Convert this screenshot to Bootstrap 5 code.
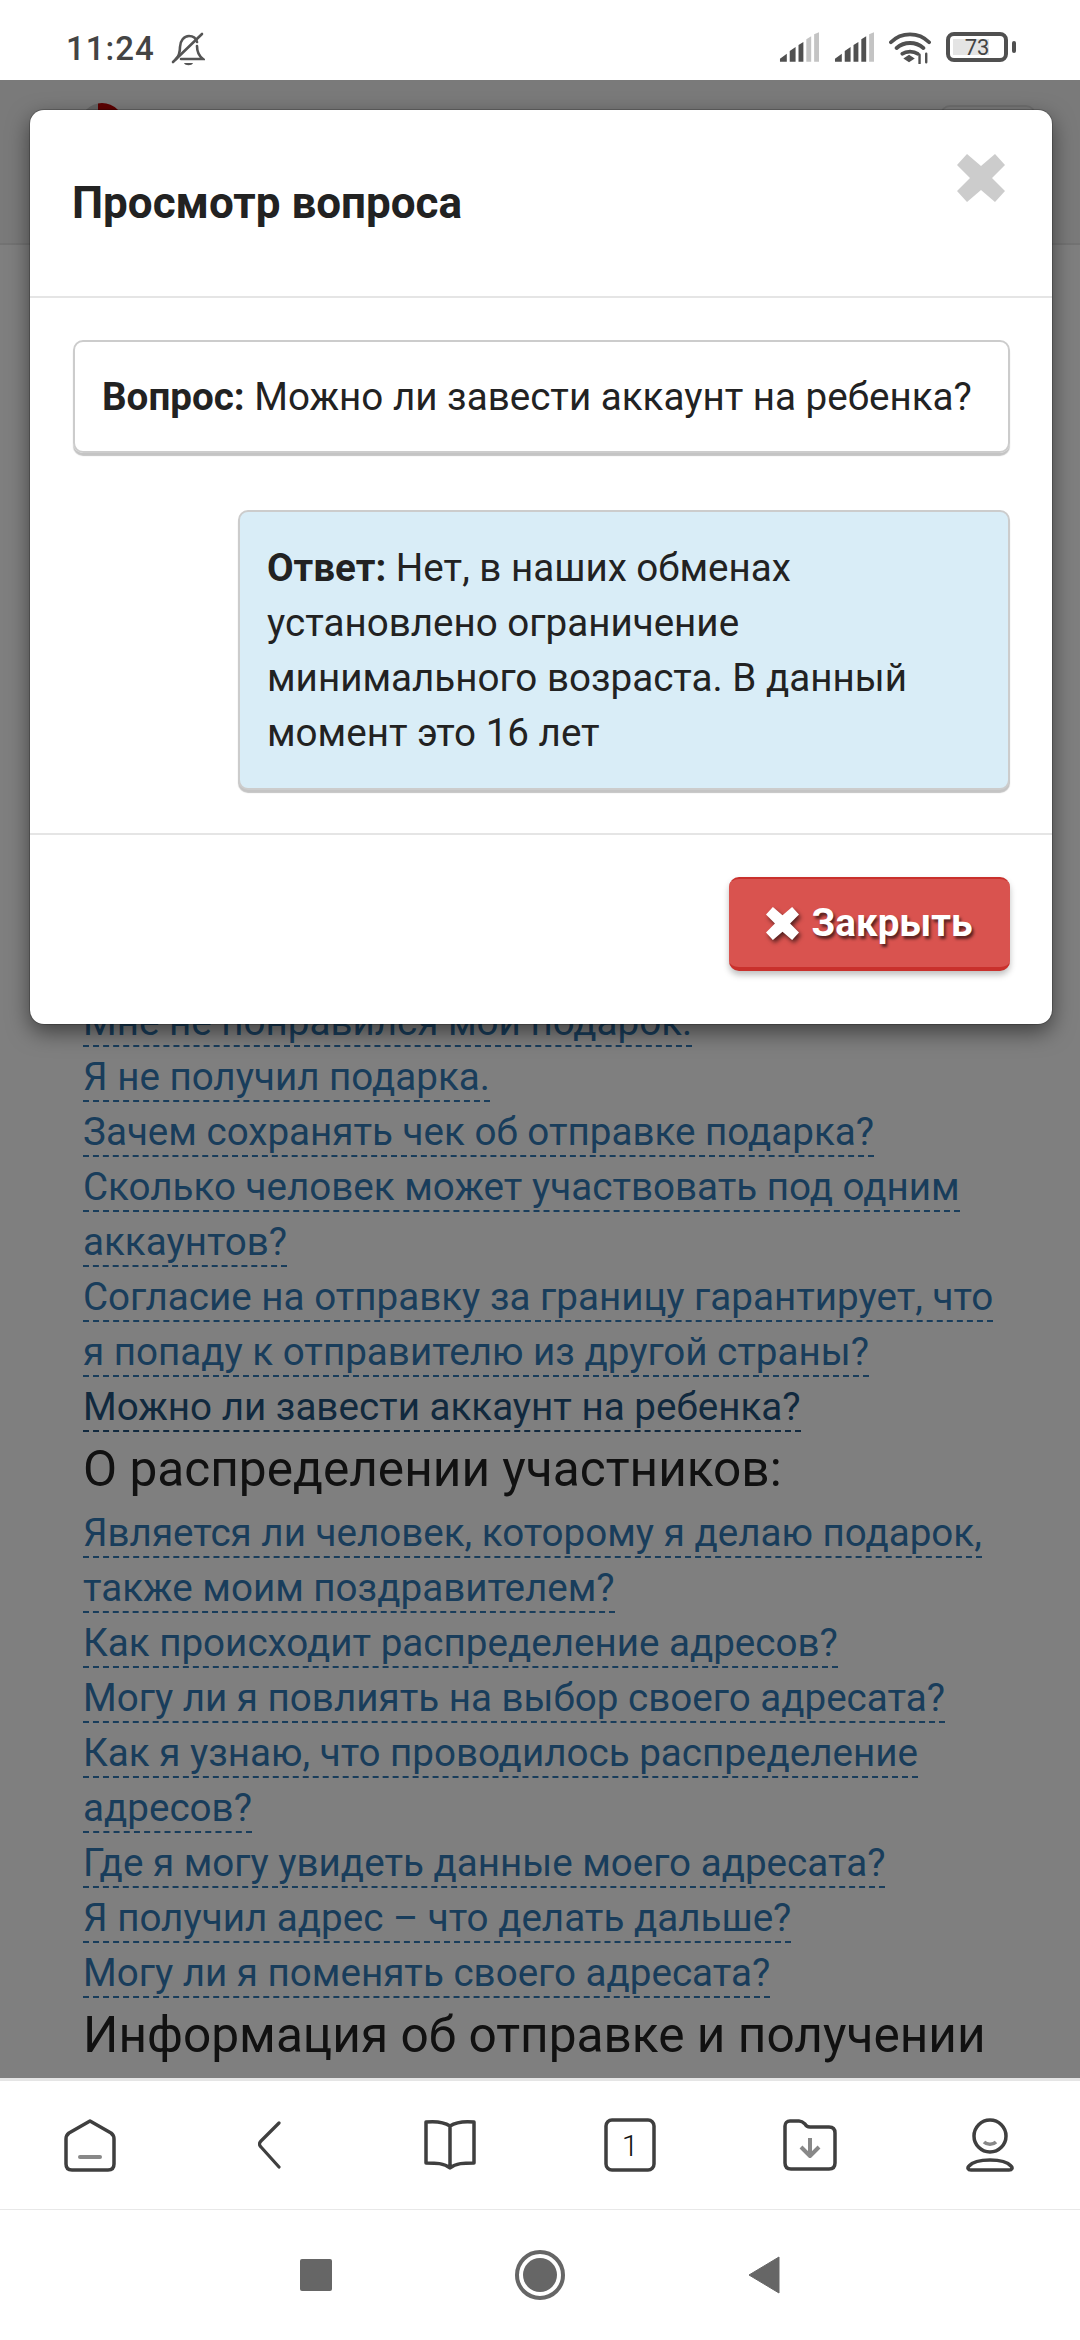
<!DOCTYPE html>
<html lang="ru">
<head>
    <meta charset="UTF-8">
    <meta name="viewport" content="width=device-width, initial-scale=1.0">
    <title>Просмотр вопроса</title>
    <link href="https://cdn.jsdelivr.net/npm/bootstrap@5.3.0/dist/css/bootstrap.min.css" rel="stylesheet">
    <style>
        body {
            width: 1080px;
            height: 2340px;
            overflow: hidden;
            background: #fff;
            color: #222;
            font-family: Roboto, "Noto Sans", sans-serif;
            font-size: 38.6px;
            line-height: 55px;
        }
        .status-bar {
            height: 80px;
            padding: 32px 64px 0 66px;
            color: #444;
        }
        .status-time {
            font-size: 33px;
            line-height: 34px;
            font-weight: 500;
            letter-spacing: 1px;
        }
        .status-icons {
            gap: 15px;
        }
        .page-view {
            height: 1998px;
            overflow: hidden;
        }
        .site-nav {
            height: 165px;
            padding: 23px 44px 0 80px;
            align-items: flex-start;
            background: #f5f5f5;
            border-bottom: 2px solid #e7e7e7;
        }
        .site-logo {
            width: 44px;
            height: 44px;
            border-radius: 50%;
            background: linear-gradient(90deg, #ccc 40%, #b00 40%);
        }
        .site-toggle {
            width: 96px;
            height: 70px;
            margin-top: 2px;
            border: 2px solid #ddd;
            border-radius: 10px;
        }
        .faq-list {
            padding: 749px 70px 0 83px;
        }
        .faq-link {
            color: #337ab7;
            text-decoration: none;
            border-bottom: 2px dashed #337ab7;
            padding-bottom: 1px;
        }
        .faq-current {
            color: #23527c;
            border-bottom-color: #23527c;
        }
        .faq-title {
            margin: 8px 0;
            font-size: 49.6px;
            line-height: 55px;
            font-weight: 400;
        }
        .view-backdrop {
            inset: 0;
            background: rgba(0, 0, 0, .5);
        }
        .modal.view-modal {
            position: absolute;
            overflow: visible;
        }
        .view-modal .modal-dialog {
            max-width: none;
            margin: 30px 28px 0 30px;
        }
        .view-modal .modal-content {
            height: 914px;
            border: 0;
            border-radius: 14px;
            box-shadow: 0 0 0 1px rgba(0, 0, 0, .2), 0 8px 22px rgba(0, 0, 0, .5);
        }
        .view-modal .modal-header {
            height: 188px;
            padding: 0 47px 0 42px;
            border-bottom: 2px solid #e5e5e5;
            border-radius: 0;
        }
        .view-modal .modal-title {
            font-size: 44px;
            font-weight: 700;
        }
        .close-mark {
            width: 48px;
            height: 48px;
            margin-top: 37px;
            padding: 0;
            border: 0;
            background: none;
            color: #ccc;
        }
        .view-modal .modal-body {
            flex: none;
            height: 535px;
            padding: 42px 42px 42px 43px;
        }
        .view-modal .modal-footer {
            height: 191px;
            align-items: flex-start;
            padding: 42px;
            border-top: 2px solid #e5e5e5;
            border-radius: 0;
        }
        .view-modal .modal-footer > * {
            margin: 0;
        }
        .bubble {
            border: 2px solid #ccc;
            border-radius: 10px;
            box-shadow: 0 3px 1px #c4c4c4;
        }
        .bubble-question {
            padding: 27px;
            white-space: nowrap;
            margin-bottom: 57px;
        }
        .bubble-answer {
            margin-left: 165px;
            padding: 28px 27px;
            background: #d9edf7;
        }
        .close-btn {
            width: 281px;
            height: 94px;
            gap: 12px;
            padding: 0;
            font-size: 38.6px;
            font-weight: 700;
            border: 0;
            border-top: 2px solid #c9302c;
            border-bottom: 4px solid #c9302c;
            border-radius: 10px;
            background: #d9534f;
            text-shadow: 2px 3px 3px rgba(0, 0, 0, .6);
            box-shadow: 0 4px 6px rgba(0, 0, 0, .25);
        }
        .browser-bar {
            height: 132px;
            margin: 0;
            border-top: 3px solid #e5e5e5;
            border-bottom: 1px solid #e8e8e8;
            color: #3f3f3f;
        }
        .browser-bar > div {
            padding: 0;
        }
        .android-bar {
            height: 130px;
            color: #666;
        }
        .android-key {
            width: 224px;
        }
    </style>
</head>
<body>

    <div class="status-bar d-flex justify-content-between">
        <div class="d-flex gap-3">
            <span class="status-time">11:24</span>
            <svg width="34" height="34" viewBox="0 0 34 34" fill="none" stroke="#555" stroke-width="2.6" stroke-linecap="round">
                <path d="M5 27c3-3 4-6 4-12 0-6 4-11 9-11 4 0 7 2 8 6M26 14c0 6 2 10 6 13H10"/>
                <path d="M2 30 31 2"/>
                <path d="M13 31h9c-1 3-8 3-9 0z" fill="#555" stroke="none"/>
            </svg>
        </div>
        <div class="status-icons d-flex align-items-start">
            <svg width="40" height="30" viewBox="0 0 41 30">
                <path d="M1 30v-3l7-5v8zM11 30V19l6-4v15z" fill="#505050"/>
                <path d="M20 30V13l5-3v20z" fill="#505050"/>
                <path d="M28 30V7l5-3v26zM36 30V2l5-2v30z" fill="#c4c4c4"/>
            </svg>
            <svg width="40" height="30" viewBox="0 0 41 30">
                <path d="M1 30v-3l7-5v8zM11 30V19l6-4v15zM20 30V13l5-3v20zM28 30V7l5-3v26z" fill="#505050"/>
                <path d="M36 30V2l5-2v30z" fill="#c4c4c4"/>
            </svg>
            <svg width="42" height="32" viewBox="0 0 44 32" fill="none" stroke="#505050" stroke-width="4" stroke-linecap="round">
                <path d="M2 10c11-11 29-11 40 0M8 16c8-7 20-7 28 0M14 22c4-3 12-3 16 0"/>
                <path d="M15 27l6-4 6 4-6 4z" fill="#505050" stroke="none"/>
                <path d="M32 23v9M39 22v9" stroke-width="2.5"/>
            </svg>
            <div class="d-flex align-items-center gap-1">
                <svg width="62" height="30" viewBox="0 0 62 30">
                    <rect x="2" y="2" width="58" height="26" rx="6" fill="#fff" stroke="#505050" stroke-width="4"/>
                    <rect x="7" y="7" width="36" height="16" fill="#e4e4e4"/>
                    <text x="31" y="23" text-anchor="middle" font-family="Roboto" font-size="22" fill="#444">73</text>
                </svg>
                <svg width="4" height="12" viewBox="0 0 4 12"><rect width="4" height="12" rx="2" fill="#505050"/></svg>
            </div>
        </div>
    </div>

    <div class="page-view position-relative">
        <nav class="navbar site-nav justify-content-between">
            <div class="site-logo"></div>
            <div class="site-toggle"></div>
        </nav>

        <div class="faq-list">
            <div><a class="faq-link" href="#">Мне не понравился мой подарок.</a></div>
            <div><a class="faq-link" href="#">Я не получил подарка.</a></div>
            <div><a class="faq-link" href="#">Зачем сохранять чек об отправке подарка?</a></div>
            <div><a class="faq-link" href="#">Сколько человек может участвовать под одним аккаунтов?</a></div>
            <div><a class="faq-link" href="#">Согласие на отправку за границу гарантирует, что я попаду к отправителю из другой страны?</a></div>
            <div><a class="faq-link faq-current" href="#">Можно ли завести аккаунт на ребенка?</a></div>
            <h3 class="faq-title">О распределении участников:</h3>
            <div><a class="faq-link" href="#">Является ли человек, которому я делаю подарок, также моим поздравителем?</a></div>
            <div><a class="faq-link" href="#">Как происходит распределение адресов?</a></div>
            <div><a class="faq-link" href="#">Могу ли я повлиять на выбор своего адресата?</a></div>
            <div><a class="faq-link" href="#">Как я узнаю, что проводилось распределение адресов?</a></div>
            <div><a class="faq-link" href="#">Где я могу увидеть данные моего адресата?</a></div>
            <div><a class="faq-link" href="#">Я получил адрес – что делать дальше?</a></div>
            <div><a class="faq-link" href="#">Могу ли я поменять своего адресата?</a></div>
            <h3 class="faq-title">Информация об отправке и получении</h3>
        </div>

        <div class="view-backdrop position-absolute"></div>

        <div class="modal view-modal d-block">
            <div class="modal-dialog">
                <div class="modal-content">
                    <div class="modal-header">
                        <h4 class="modal-title">Просмотр вопроса</h4>
                        <button type="button" class="close-mark align-self-start" aria-label="Закрыть">
                            <svg width="48" height="48" viewBox="0 0 48 48"><path d="M0 11 10 0l14 12L38 0l10 11-13 13 13 13-10 11-14-12-14 12L0 37l13-13z" fill="currentColor"/></svg>
                        </button>
                    </div>
                    <div class="modal-body">
                        <div class="bubble bubble-question"><strong>Вопрос:</strong> Можно ли завести аккаунт на ребенка?</div>
                        <div class="bubble bubble-answer"><strong>Ответ:</strong> Нет, в наших обменах установлено ограничение минимального возраста. В данный момент это 16 лет</div>
                    </div>
                    <div class="modal-footer">
                        <button type="button" class="btn btn-danger close-btn d-flex align-items-center justify-content-center">
                            <svg width="33" height="33" viewBox="0 0 48 48" style="filter: drop-shadow(2px 3px 2px rgba(0,0,0,.6))"><path d="M0 11 10 0l14 12L38 0l10 11-13 13 13 13-10 11-14-12-14 12L0 37l13-13z" fill="#fff"/></svg>
                            Закрыть
                        </button>
                    </div>
                </div>
            </div>
        </div>
    </div>

    <div class="browser-bar row align-items-center">
        <div class="col-2 d-flex justify-content-center">
            <svg width="52" height="54" viewBox="0 0 52 54" fill="none" stroke="currentColor" stroke-width="3.5" stroke-linejoin="round">
                <path d="M26 3 47 15c2 1.500 3 3 3 6v25c0 4-2 6-6 6H8c-4 0-6-2-6-6V21c0-3 1-4.500 3-6z"/>
                <path d="M16 39h20" stroke="#888" stroke-width="4" stroke-linecap="round"/>
            </svg>
        </div>
        <div class="col-2 d-flex justify-content-center">
            <svg width="24" height="48" viewBox="0 0 24 48" fill="none" stroke="currentColor" stroke-width="3.200" stroke-linecap="round" stroke-linejoin="round">
                <path d="M21 2 3 20c-2 2-2 4 0 6l18 20"/>
            </svg>
        </div>
        <div class="col-2 d-flex justify-content-center">
            <svg width="52" height="52" viewBox="0 0 52 52" fill="none" stroke="currentColor" stroke-width="3.5" stroke-linejoin="round">
                <path d="M26 7C20 3 12 2 2 3v41c10 0 18 0 24 5 6-5 14-5 24-5V3C40 2 32 3 26 7zM26 7v42"/>
            </svg>
        </div>
        <div class="col-2 d-flex justify-content-center">
            <svg width="52" height="54" viewBox="0 0 52 54">
                <rect x="2" y="2" width="48" height="50" rx="6" fill="none" stroke="currentColor" stroke-width="3.5"/>
                <text x="26" y="38" text-anchor="middle" font-family="Roboto" font-weight="300" font-size="30" fill="#111">1</text>
            </svg>
        </div>
        <div class="col-2 d-flex justify-content-center">
            <svg width="54" height="52" viewBox="0 0 54 52" fill="none" stroke="currentColor" stroke-width="3.5" stroke-linejoin="round">
                <path d="M2 7c0-3 2-5 5-5h9c3 0 4 1 6 3 1 2 3 3 5 3h19c4 0 6 2 6 6v30c0 4-2 6-6 6H8c-4 0-6-2-6-6z"/>
                <path d="M27 19v18M18 28l9 9 9-9" stroke="#888" stroke-width="4"/>
            </svg>
        </div>
        <div class="col-2 d-flex justify-content-center">
            <svg width="48" height="54" viewBox="0 0 48 54" fill="none" stroke="currentColor" stroke-width="3.5">
                <circle cx="24" cy="18" r="16"/>
                <path d="M18 24c3 3 9 3 12 0" stroke="#888"/>
                <path d="M5 52c-3 0-4-2-2-4 7-8 35-8 42 0 2 2 1 4-2 4z" stroke-linejoin="round"/>
            </svg>
        </div>
    </div>

    <div class="android-bar d-flex justify-content-center align-items-center">
        <div class="android-key d-flex justify-content-center">
            <svg width="32" height="32" viewBox="0 0 32 32"><rect width="32" height="32" rx="2" fill="currentColor"/></svg>
        </div>
        <div class="android-key d-flex justify-content-center">
            <svg width="50" height="50" viewBox="0 0 50 50"><circle cx="25" cy="25" r="23" fill="none" stroke="currentColor" stroke-width="4"/><circle cx="25" cy="25" r="17" fill="currentColor"/></svg>
        </div>
        <div class="android-key d-flex justify-content-center">
            <svg width="32" height="38" viewBox="0 0 32 38"><path d="M31 1v36L1 19z" fill="currentColor" stroke="currentColor" stroke-linejoin="round"/></svg>
        </div>
    </div>

    <script src="https://cdn.jsdelivr.net/npm/bootstrap@5.3.0/dist/js/bootstrap.bundle.min.js"></script>
</body>
</html>
